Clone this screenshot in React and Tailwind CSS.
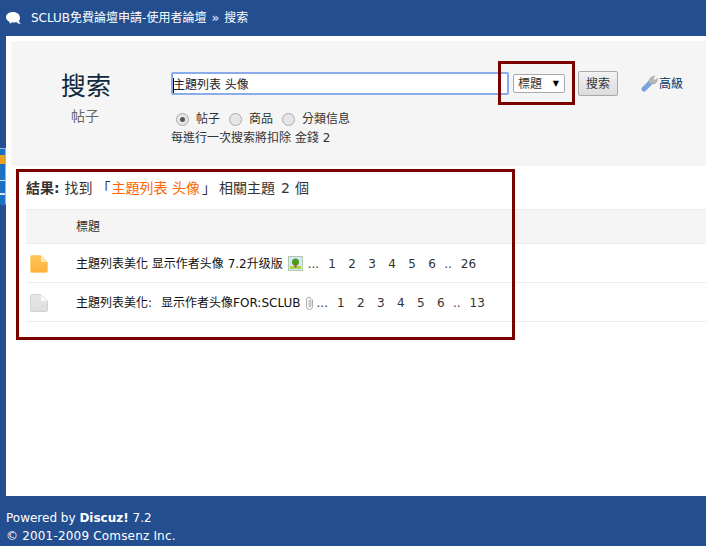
const cjk = "font-['DejaVu_Sans','Noto_Sans_CJK_TC',sans-serif]";

function FileIcon({ hot }) {
  const id = hot ? "fileHot" : "fileCold";
  return (
    <svg width="18" height="18" viewBox="0 0 18 18">
      <defs>
        <linearGradient id={id} x1="0" y1="0" x2="0" y2="1">
          <stop offset="0" stopColor={hot ? "#ffc65c" : "#e6e6e6"} />
          <stop offset="1" stopColor={hot ? "#ffb03a" : "#dedede"} />
        </linearGradient>
      </defs>
      <path
        d="M1.500 .5h9l7 6.500v9a1.500 1.500 0 0 1-1.500 1.500h-14.500a1 1 0 0 1-1-1v-14.500a1 1 0 0 1 .5-1z"
        fill={`url(#${id})`}
        stroke={hot ? "#ffcf80" : "#d2d2d2"}
      />
      <path d="M11 1l6 6h-6z" fill={hot ? "#ffe6b4" : "#fbfbfb"} />
    </svg>
  );
}

function PageLinks({ last }) {
  return (
    <span className="inline-flex items-center text-[#333]">
      <span className="mr-[9px]">...</span>
      {["1", "2", "3", "4", "5", "6"].map((n) => (
        <span key={n} className="w-[20px]">{n}</span>
      ))}
      <span className="mr-[9px] -ml-[4px]">..</span>
      <span>{last}</span>
    </span>
  );
}

function Radio({ label, checked, gap }) {
  return (
    <label className="flex items-center">
      <span className="w-[13px] h-[13px] rounded-full border border-[#a9a9a9] bg-[#e6e6e6] flex items-center justify-center mr-[7px]">
        {checked && <span className="w-[5px] h-[5px] rounded-full bg-[#555]" />}
      </span>
      <span className={gap}>{label}</span>
    </label>
  );
}

export default function App() {
  return (
    <div className={`relative w-[706px] h-[546px] overflow-hidden flex flex-col bg-[#234e90] text-[12px] text-[#333] ${cjk}`}>
      {/* top bar */}
      <div className="h-[36px] shrink-0 flex items-center pl-[6px] text-white">
        <svg width="15" height="13" viewBox="0 0 15 13" className="mr-[10px] mt-[1px]">
          <path d="M7 0C3 0 0 2.200 0 5.200c0 1.900 1.200 3.500 3 4.400.4 1 1 1.900 2 2.400-.3-.6-.4-1.100-.3-1.600.7.100 1.500.200 2.300.200 1.200 0 2.300-.2 3.300-.6.900 1.300 2.600 2 4.700 2-1-.8-1.700-1.800-2-3 .7-.9 1-1.900 1-3C14 2.200 11 0 7 0z" fill="#fff" />
        </svg>
        <span>SCLUB</span>
        <span>免費論壇申請-使用者論壇</span>
        <span className="ml-[5px] mr-[5px] font-bold text-[#c9d6ea]">»</span>
        <span>搜索</span>
      </div>

      {/* body */}
      <div className="flex-1 ml-[6px] bg-white pt-[5px] pl-[5px]">
        <div className="h-[125px] bg-[#f5f5f5] flex">
          <div className="w-[150px] pt-[30px] flex flex-col items-center">
            <div className="text-[25px] leading-[32px] text-[#10293f] font-['Liberation_Serif','Noto_Sans_CJK_TC',serif]">搜索</div>
            <div className="text-[14px] leading-[20px] mt-[3px] -ml-[2px] text-[#666]">帖子</div>
          </div>
          <div className="pl-[10px] pt-[30px]">
            <div className="flex items-center">
              <div className="w-[338px] h-[23px] border-2 border-[#8bacea] rounded-[2px] bg-white flex text-[#222]">
                <span className="h-[15px] leading-[15px] mt-[4px] border-l border-black -mr-[1px]">
                  <span className="relative -ml-[1px]">主題列表 头像</span>
                </span>
              </div>
              <div className="w-[52px] h-[19px] ml-[4px] border border-[#a9a9a9] rounded-[2px] bg-white flex items-center justify-between pl-[4px] pr-[5px]">
                <span className="mt-[1px]">標題</span>
                <span className="text-[8px] text-black">▼</span>
              </div>
              <button className="w-[40px] h-[25px] ml-[13px] pt-[1px] border border-[#a9a9a9] rounded-[2px] bg-gradient-to-b from-[#f2f2f2] to-[#dcdcdc] text-[12px]">搜索</button>
              <div className="flex items-center ml-[23px] text-[#003366]">
                <svg width="17" height="17" viewBox="0 0 17 17" className="mr-[1px]">
                  <path d="M3 14l6-6" stroke="#7ba4dd" strokeWidth="5" strokeLinecap="round" />
                  <path d="M8 7.500C7.500 4 10 1 14 1l-2 2.500 2 2 2.500-2c.3 3.500-2.500 6-6 5.500z" fill="#b8b8b8" stroke="#9a9a9a" strokeWidth="0.500" />
                </svg>
                <span>高級</span>
              </div>
            </div>
            <div className="flex items-center mt-[14px] ml-[5px] leading-[18px]">
              <Radio label="帖子" checked gap="mr-[9px]" />
              <Radio label="商品" gap="mr-[9px]" />
              <Radio label="分類信息" />
            </div>
            <div className="leading-[18px] mt-[1px]">每進行一次搜索將扣除 金錢 2</div>
          </div>
        </div>

        <div className="pl-[15px] pt-[12px]">
          <h2 className="flex text-[14px] leading-[20px] mb-[11px]">
            <strong className="mr-[5px]">結果:</strong>
            <span>找到</span>
            <span className="ml-[4px]">「</span>
            <span className="ml-[1px] text-[#ff6600]">主題列表 头像</span>
            <span className="ml-[2px]">」</span>
            <span className="ml-[3px]">相關主題</span>
            <span className="ml-[6px]">2</span>
            <span className="ml-[5px]">個</span>
          </h2>
          <div className="h-[35px] pt-[1px] bg-[#f5f5f5] border-t border-b border-[#ececec] flex items-center pl-[50px]">標題</div>
          <div className="h-[39px] pt-[1px] border-b border-[#ececec] flex items-center">
            <span className="w-[50px] pl-[4px] flex"><FileIcon hot /></span>
            <span className="text-[#111]">主題列表美化 显示作者头像 7.2升级版</span>
            <svg width="15" height="15" viewBox="0 0 15 15" className="ml-[5px] mr-[5px]">
              <rect x="0.500" y="0.500" width="14" height="14" fill="#cfeaff" stroke="#b9c6a5" />
              <rect x="2" y="10" width="11" height="3" fill="#a8d848" />
              <circle cx="7.500" cy="6" r="3.500" fill="#4f9a1c" />
              <rect x="6.500" y="8" width="2" height="3.500" fill="#b05a20" />
            </svg>
            <PageLinks last="26" />
          </div>
          <div className="h-[39px] pt-[1px] border-b border-[#ececec] flex items-center">
            <span className="w-[50px] pl-[4px] flex"><FileIcon /></span>
            <span className="text-[#111]">主題列表美化:<span className="ml-[9px]">显示作者头像FOR:SCLUB</span></span>
            <svg width="9" height="14" viewBox="0 0 9 14" className="ml-[4px] mr-[3px]">
              <path d="M7.500 3.500v7a3 3 0 0 1-6 0v-7a2.200 2.200 0 0 1 4.400 0v6.500a.9.900 0 0 1-1.800 0V4" fill="none" stroke="#aaa" />
            </svg>
            <PageLinks last="13" />
          </div>
        </div>
      </div>

      {/* footer */}
      <div className="h-[50px] shrink-0 pl-[6px] pt-[13px] text-white leading-[18px]">
        <div>Powered by <strong>Discuz!</strong> 7.2</div>
        <div className="tracking-[0.18px]">© 2001-2009 Comsenz Inc.</div>
      </div>

      {/* floating side tab */}
      <div className="absolute left-0 top-[148px] w-[6px] h-[57px] bg-[#1d6fc4] border-t border-r border-[#8fb8e8] rounded-br-[2px]">
        <div className="h-[9px] mt-[6px] bg-[#e8a020]" />
        <div className="h-[1px] mt-[16px] bg-[#cfe4fa]" />
        <div className="h-[2px] mt-[12px] bg-[#cfe4fa]" />
      </div>

      {/* annotation frames */}
      <div className="absolute left-[16px] top-[169px] w-[499px] h-[171px] border-[3px] border-[#7b0000]" />
      <div className="absolute left-[498px] top-[61px] w-[77px] h-[44px] border-[3px] border-[#7b0000]" />
    </div>
  );
}
